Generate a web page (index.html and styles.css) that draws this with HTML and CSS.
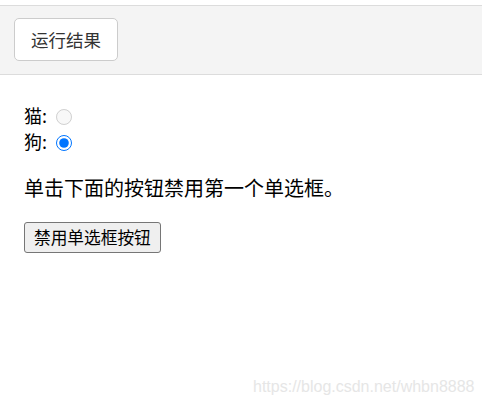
FILE: index.html
```html
<!DOCTYPE html>
<html lang="zh">

<head>
    <meta charset="UTF-8">
    <meta name="viewport" content="width=device-width, initial-scale=1.0">
    <title>运行结果</title>
    <link rel="stylesheet" href="styles.css">
</head>

<body>
    <!-- 顶部工具条 -->
    <div class="bar">
        <button class="run">运行结果</button>
    </div>
    <!-- 结果区域 -->
    <div class="result">
        <div class="row">猫: <input type="radio" name="pet" id="cat" disabled></div>
        <div class="row">狗: <input type="radio" name="pet" id="dog" checked></div>
        <p>单击下面的按钮禁用第一个单选框。</p>
        <button class="demo">禁用单选框按钮</button>
    </div>
    <div class="mark">https://blog.csdn.net/whbn8888</div>
</body>

</html>
```

FILE: styles.css
```css
* {
    margin: 0;
    padding: 0;
}

body {
    position: relative;
    height: 405px;
    background-color: #fff;
    font-family: "Noto Sans CJK SC", sans-serif;
    color: #000;
}

.bar {
    margin-top: 5px;
    border-top: 1px solid #dcdcdc;
    border-bottom: 1px solid #dcdcdc;
    background-color: #f4f4f4;
    padding: 12px 0 0 14px;
    box-sizing: border-box;
    height: 70px;
}

.run {
    width: 104px;
    height: 43px;
    background-color: #fff;
    border: 1px solid #cccccc;
    border-radius: 5px;
    font-family: "Noto Sans CJK SC", sans-serif;
    font-size: 17.5px;
    color: #333;
}

.result {
    padding: 27px 0 0 24px;
    font-size: 20px;
}

.row {
    height: 26px;
    line-height: 26px;
    font-size: 18px;
}

.row input {
    width: 16px;
    height: 16px;
    margin: 0 0 0 5px;
    vertical-align: -2px;
}

.result p {
    margin: 21px 0 20px;
    line-height: 26px;
}

.demo {
    height: 31px;
    padding: 0 9px;
    font-family: "Noto Sans CJK SC", sans-serif;
    font-size: 16.7px;
    color: #000;
    background-color: #efefef;
    border: 1px solid #767676;
    border-radius: 3px;
}

.mark {
    position: absolute;
    left: 253px;
    bottom: 9px;
    font-family: "Liberation Sans", Arial, sans-serif;
    font-size: 16px;
    color: #e6e6e6;
}
```
